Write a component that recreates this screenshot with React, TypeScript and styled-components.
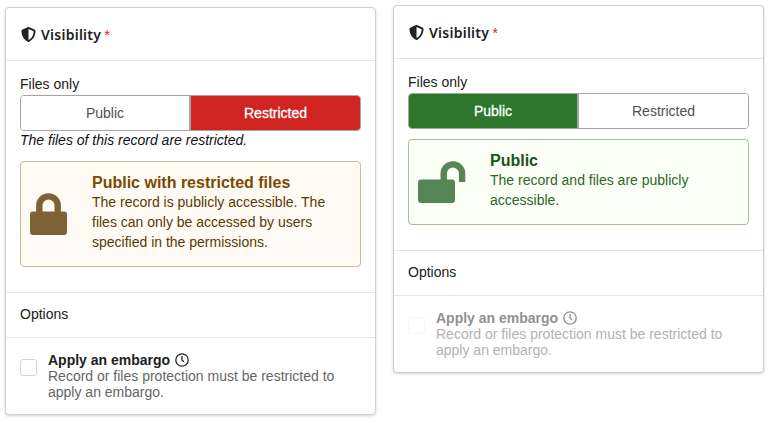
import React from "react";
import styled, { createGlobalStyle } from "styled-components";
import { FaShieldHalved } from "react-icons/fa6";

type Access = "public" | "restricted";

const palette = {
  public: {
    active: "#2c772c",
    border: "#a3c293",
    background: "#fcfff5",
    title: "#1a531b",
    text: "#2c662d",
    icon: "#568656",
  },
  restricted: {
    active: "#d02420",
    border: "#c9ba9b",
    background: "#fffaf3",
    title: "#794b02",
    text: "#573a08",
    icon: "#7e6236",
  },
};

const GlobalStyle = createGlobalStyle`
  *, *::before, *::after { box-sizing: border-box; }
  body {
    margin: 0;
    background: #fff;
    color: #212121;
    font: 14px/20px "Liberation Sans", Arial, sans-serif;
  }
`;

const Page = styled.main`
  display: flex;
  align-items: flex-start;
  gap: 17px;
  padding: 5px 6px 8px 5px;
`;

const Card = styled.section<{ $lowered?: boolean }>`
  width: 371px;
  margin-top: ${(p) => (p.$lowered ? 2 : 0)}px;
  background: #fff;
  border: 1px solid #d0d0d1;
  border-radius: 4px;
  box-shadow: 0 1px 3px 0 #d4d4d5;
`;

const CardHeader = styled.header`
  display: flex;
  align-items: center;
  height: 52px;
  padding: 1px 15px 0;
  font: 600 14px/20px "Noto Sans", sans-serif;
  letter-spacing: 0.25px;
`;

const ShieldIcon = styled(FaShieldHalved)`
  width: 15px;
  height: 15px;
  margin: -1px 5px 0 0;
`;

const Required = styled.span`
  margin: 0 0 0 3px;
  color: #db2828;
  font: 15px/16px "Liberation Sans", Arial, sans-serif;
`;

const Content = styled.div`
  padding: 13px 14px 25px;
  border-top: 1px solid #e6e6e6;
`;

const FieldLabel = styled.div`
  height: 21px;
`;

const ButtonGroup = styled.div`
  display: grid;
  grid-template-columns: 168px 1fr;
  height: 36px;
  border: 1px solid #a5a5a5;
  border-radius: 4px;
  overflow: hidden;
`;

const ToggleButton = styled.button<{ $active: boolean; $access: Access }>`
  border: 0;
  padding: 0;
  font: 14px/20px "Liberation Sans", Arial, sans-serif;
  color: ${(p) => (p.$active ? "#fff" : "#505050")};
  background: ${(p) => (p.$active ? palette[p.$access].active : "#fff")};
  -webkit-text-stroke: ${(p) => (p.$active ? "0.3px #fff" : "0")};
  & + & {
    border-left: 2px solid #a5a5a5;
  }
`;

const HelpText = styled.em`
  display: block;
  height: 20px;
  margin-bottom: 10px;
  line-height: 18px;
  color: #111;
`;

const Message = styled.div<{ $access: Access; $spaced?: boolean }>`
  display: grid;
  grid-template-columns: ${(p) => (p.$access === "public" ? 72 : 62)}px 1fr;
  align-items: center;
  margin-top: ${(p) => (p.$spaced ? 10 : 0)}px;
  padding: 10px 9px 14px;
  color: ${(p) => palette[p.$access].text};
  background: ${(p) => palette[p.$access].background};
  border: 1px solid ${(p) => palette[p.$access].border};
  border-radius: 4px;
`;

const MessageIcon = styled.span<{ $access: Access }>`
  display: flex;
  margin-top: 4px;
  color: ${(p) => palette[p.$access].icon};
`;

const MessageBody = styled.div`
  padding-right: 20px;
`;

const MessageTitle = styled.div<{ $access: Access }>`
  height: 20px;
  color: ${(p) => palette[p.$access].title};
  font-size: 16px;
  line-height: 22px;
  font-weight: 700;
`;

const OptionsHeading = styled.div`
  height: 45px;
  padding: 11px 14px;
  border-top: 1px solid #e6e6e6;
`;

const Embargo = styled.div`
  height: 77px;
  padding: 14px 14px 0;
  border-top: 1px solid #e6e6e6;
`;

const EmbargoRow = styled.label<{ $disabled: boolean }>`
  display: grid;
  grid-template-columns: 17px 1fr;
  column-gap: 11px;
  line-height: 16px;
  opacity: ${(p) => (p.$disabled ? 0.5 : 1)};
`;

const Checkbox = styled.span<{ $disabled: boolean }>`
  width: 17px;
  height: 17px;
  margin-top: 7px;
  background: #fff;
  border: 1px solid ${(p) => (p.$disabled ? "#f1f1f1" : "#d4d4d5")};
  border-radius: 3px;
`;

const EmbargoTitle = styled.div`
  display: flex;
  align-items: center;
  gap: 5px;
  font-weight: 700;
`;

const EmbargoText = styled.div`
  width: 295px;
  color: #666;
`;

function LockIcon({ open }: { open: boolean }) {
  return (
    <svg width={open ? 48 : 37} height="42" viewBox={`0 0 ${open ? 48 : 37} 42`}>
      <rect y="18.6" width="37" height="23.4" rx="3" fill="currentColor" />
      <path
        d={
          open
            ? "M25.7 20v-7.4a9.2 9.2 0 0 1 18.4 0V21"
            : "M9.3 20v-7.4a9.2 9.2 0 0 1 18.4 0V20"
        }
        fill="none"
        stroke="currentColor"
        strokeWidth="6.4"
      />
    </svg>
  );
}

function ClockIcon() {
  return (
    <svg width="14" height="14" viewBox="0 0 14 14" fill="none" stroke="currentColor">
      <circle cx="7" cy="7" r="6.2" strokeWidth="1.3" />
      <path d="M7 3v4.2l2 1.6" strokeWidth="1.3" />
    </svg>
  );
}

interface VisibilityCardProps {
  access: Access;
  title: string;
  text: string;
  help?: string;
}

function VisibilityCard({ access, title, text, help }: VisibilityCardProps) {
  const disabled = access === "public";
  return (
    <Card $lowered={access === "restricted"}>
      <CardHeader>
        <ShieldIcon />
        Visibility
        <Required>*</Required>
      </CardHeader>
      <Content>
        <FieldLabel>Files only</FieldLabel>
        <ButtonGroup>
          <ToggleButton $access="public" $active={access === "public"}>
            Public
          </ToggleButton>
          <ToggleButton $access="restricted" $active={access === "restricted"}>
            Restricted
          </ToggleButton>
        </ButtonGroup>
        {help && <HelpText>{help}</HelpText>}
        <Message $access={access} $spaced={!help}>
          <MessageIcon $access={access}>
            <LockIcon open={access === "public"} />
          </MessageIcon>
          <MessageBody>
            <MessageTitle $access={access}>{title}</MessageTitle>
            {text}
          </MessageBody>
        </Message>
      </Content>
      <OptionsHeading>Options</OptionsHeading>
      <Embargo>
        <EmbargoRow $disabled={disabled}>
          <Checkbox $disabled={disabled} />
          <div>
            <EmbargoTitle>
              Apply an embargo <ClockIcon />
            </EmbargoTitle>
            <EmbargoText>
              Record or files protection must be restricted to apply an embargo.
            </EmbargoText>
          </div>
        </EmbargoRow>
      </Embargo>
    </Card>
  );
}

export default function App() {
  return (
    <>
      <GlobalStyle />
      <Page>
        <VisibilityCard
          access="restricted"
          title="Public with restricted files"
          text="The record is publicly accessible. The files can only be accessed by users specified in the permissions."
          help="The files of this record are restricted."
        />
        <VisibilityCard
          access="public"
          title="Public"
          text="The record and files are publicly accessible."
        />
      </Page>
    </>
  );
}
